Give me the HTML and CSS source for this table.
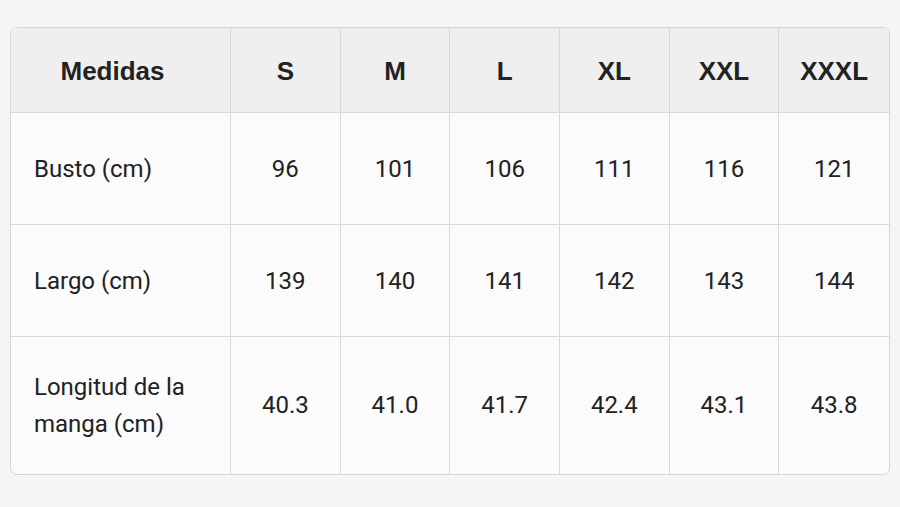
FILE: index.html
```html
<!DOCTYPE html>
<html lang="es">
<head>
<meta charset="utf-8">
<title>Medidas</title>
<link rel="stylesheet" href="styles.css">
</head>
<body>
<div class="wrap">
<table class="sizes">
<colgroup>
<col class="c-label"><col><col><col><col><col><col>
</colgroup>
<thead>
<tr><th class="first">Medidas</th><th>S</th><th>M</th><th>L</th><th>XL</th><th>XXL</th><th>XXXL</th></tr>
</thead>
<tbody>
<tr class="r"><td class="label">Busto (cm)</td><td>96</td><td>101</td><td>106</td><td>111</td><td>116</td><td>121</td></tr>
<tr class="r"><td class="label">Largo (cm)</td><td>139</td><td>140</td><td>141</td><td>142</td><td>143</td><td>144</td></tr>
<tr class="r tall"><td class="label">Longitud de la manga (cm)</td><td>40.3</td><td>41.0</td><td>41.7</td><td>42.4</td><td>43.1</td><td>43.8</td></tr>
</tbody>
</table>
</div>
</body>
</html>
```
FILE: styles.css
```css
html, body {
  margin: 0;
  padding: 0;
  background: #f5f5f5;
}
.wrap {
  padding: 27px 10px 0 10px;
}
.sizes {
  width: 880px;
  table-layout: fixed;
  border-collapse: separate;
  border-spacing: 0;
  border: 1px solid #d6d6d6;
  border-radius: 7px;
  background: #fbfbfb;
  overflow: hidden;
  font-family: Roboto, "Liberation Sans", sans-serif;
  color: #222;
}
.c-label { width: 220px; }
.sizes th, .sizes td {
  border-right: 1px solid #d9d9d9;
  border-bottom: 1px solid #d9d9d9;
  text-align: center;
  padding: 0;
}
.sizes th:last-child, .sizes td:last-child { border-right: none; }
.sizes tbody tr:last-child td { border-bottom: none; }
.sizes thead th {
  background: #efefef;
  height: 82px;
  padding-top: 2px;
  font-family: "Liberation Sans", Arial, sans-serif;
  font-weight: bold;
  font-size: 26px;
}
.sizes thead th.first { padding-right: 16px; }
.sizes td {
  font-size: 24px;
  font-weight: normal;
  height: 110px;
  line-height: 37px;
  padding-top: 1px;
}
.sizes tr.tall td { height: 137px; padding-top: 0; }
.sizes td.label {
  text-align: left;
  padding-left: 23px;
  padding-right: 40px;
}
```
